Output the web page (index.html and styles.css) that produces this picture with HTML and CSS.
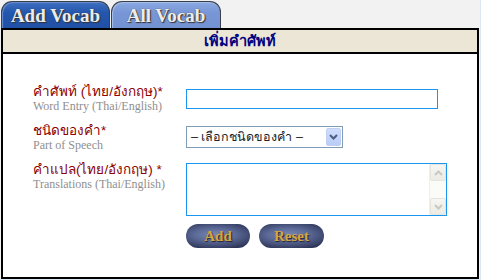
FILE: index.html
```html
<!DOCTYPE html>
<html lang="th">
<head>
<meta charset="utf-8">
<title>Vocab</title>
<link rel="stylesheet" href="styles.css">
</head>
<body>
<div class="page">
  <div class="tabs">
    <div class="tab tab-active">Add Vocab</div>
    <div class="tab tab-other">All Vocab</div>
  </div>
  <div class="panel">
    <div class="panel-head">เพิ่มคำศัพท์</div>
    <div class="form">
      <div class="row row1">
        <div class="label"><div class="th">คำศัพท์ (ไทย/อังกฤษ)*</div><div class="en">Word Entry (Thai/English)</div></div>
        <input class="text-input" type="text">
      </div>
      <div class="row row2">
        <div class="label"><div class="th">ชนิดของคำ*</div><div class="en">Part of Speech</div></div>
        <div class="select">
          <span class="select-text">– เลือกชนิดของคำ –</span>
          <span class="select-btn"><svg width="9" height="6" viewBox="0 0 9 6"><path d="M1 1 L4.5 4.5 L8 1" fill="none" stroke="#4d5d80" stroke-width="2"/></svg></span>
        </div>
      </div>
      <div class="row row3">
        <div class="label"><div class="th">คำแปล(ไทย/อังกฤษ) *</div><div class="en">Translations (Thai/English)</div></div>
        <div class="area">
          <textarea class="area-text"></textarea>
          <div class="scroll">
            <span class="sbtn"><svg width="9" height="6" viewBox="0 0 9 6"><path d="M1 5 L4.5 1.5 L8 5" fill="none" stroke="#c9c9c0" stroke-width="2"/></svg></span>
            <span class="sbtn"><svg width="9" height="6" viewBox="0 0 9 6"><path d="M1 1 L4.5 4.5 L8 1" fill="none" stroke="#c9c9c0" stroke-width="2"/></svg></span>
          </div>
        </div>
      </div>
      <div class="buttons">
        <button class="btn btn-add">Add</button>
        <button class="btn btn-reset">Reset</button>
      </div>
    </div>
  </div>
</div>
</body>
</html>
```
FILE: styles.css
```css
html, body {
  margin: 0;
  padding: 0;
  background: #dde7f0;
}
.page {
  width: 480px;
  height: 279px;
  background: #f2f2f2;
  display: flex;
  flex-direction: column;
}
.tabs {
  display: flex;
  height: 28px;
  padding-left: 1px;
  gap: 1px;
}
.tab {
  box-sizing: border-box;
  width: 109px;
  height: 28px;
  margin-top: 1px;
  border: 1px solid #3a3f4a;
  border-bottom: none;
  border-radius: 11px 11px 0 0;
  font-family: "Liberation Serif", serif;
  font-weight: bold;
  font-size: 19px;
  line-height: 27px;
  text-align: center;
  color: #ececec;
  text-shadow: 1px 1px 1px #333, 0 0 1px #444;
}
.tab-active {
  background: linear-gradient(#3f6fc0, #2456ad 40%, #2050a5);
  box-shadow: inset 1px 1px 1px #6a90d0;
}
.tab-other {
  width: 110px;
  background: linear-gradient(#8aa8e0, #7896d6 40%, #7392d2);
  box-shadow: inset 1px 1px 1px #a8c0ea;
}
.panel {
  flex: 1;
  margin-left: 1px;
  width: 478px;
  box-sizing: border-box;
  border: 2px solid #000;
  background: #fff;
  display: flex;
  flex-direction: column;
}
.panel-head {
  height: 22px;
  background: #ebe6d6;
  border-bottom: 2px solid #000;
  text-align: center;
  font-family: "Liberation Sans", "DejaVu Sans", sans-serif;
  font-weight: bold;
  font-size: 14.5px;
  line-height: 22px;
  color: #000080;
}
.form {
  padding: 30px 0 0 30px;
}
.row {
  display: flex;
  align-items: flex-start;
  height: 39px;
}
.label {
  width: 153px;
  flex: none;
}
.th {
  font-family: "Liberation Sans", "DejaVu Sans", sans-serif;
  font-size: 13.5px;
  line-height: 15px;
  color: #8b0000;
}
.en {
  font-family: "Liberation Serif", serif;
  font-size: 12px;
  line-height: 15px;
  color: #8f8f8f;
}
.text-input {
  box-sizing: border-box;
  margin: 5px 0 0 0;
  width: 252px;
  height: 20px;
  border: 1px solid #1a96f0;
  padding: 0;
  outline: none;
}
.row2 .select {
  margin-top: 3px;
}
.select {
  box-sizing: border-box;
  width: 157px;
  height: 22px;
  border: 1px solid #7f9db9;
  display: flex;
  align-items: center;
  justify-content: space-between;
  padding: 0 1px 0 4px;
  font-family: "Liberation Sans", "DejaVu Sans", sans-serif;
  font-size: 12.5px;
  color: #222;
}
.select-btn {
  width: 15px;
  height: 18px;
  box-sizing: border-box;
  border: 1px solid #c0d0f4;
  border-radius: 2px;
  background: linear-gradient(#cfdcfc, #b9cdf8);
  display: flex;
  align-items: center;
  justify-content: center;
}
.row3 {
  height: auto;
}
.area {
  box-sizing: border-box;
  margin-top: 1px;
  width: 261px;
  height: 53px;
  border: 1px solid #1a96f0;
  display: flex;
}
.area-text {
  flex: 1;
  border: none;
  resize: none;
  outline: none;
  padding: 0;
  margin: 0;
}
.scroll {
  width: 16px;
  display: flex;
  flex-direction: column;
  justify-content: space-between;
  background: #fbfbf8;
  border-left: 1px solid #f0efe8;
}
.sbtn {
  box-sizing: border-box;
  width: 16px;
  height: 17px;
  border: 1px solid #e6e4dc;
  border-radius: 2px;
  background: linear-gradient(#f6f6f2, #ecebe4);
  display: flex;
  align-items: center;
  justify-content: center;
}
.buttons {
  display: flex;
  gap: 9px;
  margin: 8px 0 0 153px;
}
.btn {
  width: 65px;
  height: 24px;
  border: none;
  border-radius: 12px;
  padding: 0;
  background: radial-gradient(ellipse 70% 60% at 45% 45%, #7a88b4 0%, #5c6a98 45%, #2e3658 100%);
  font-family: "Liberation Serif", serif;
  font-weight: bold;
  font-size: 15px;
  color: #d6a63e;
  text-shadow: 1px 1px 1px #1c2038;
}
.btn-add {
  width: 64px;
}
```
